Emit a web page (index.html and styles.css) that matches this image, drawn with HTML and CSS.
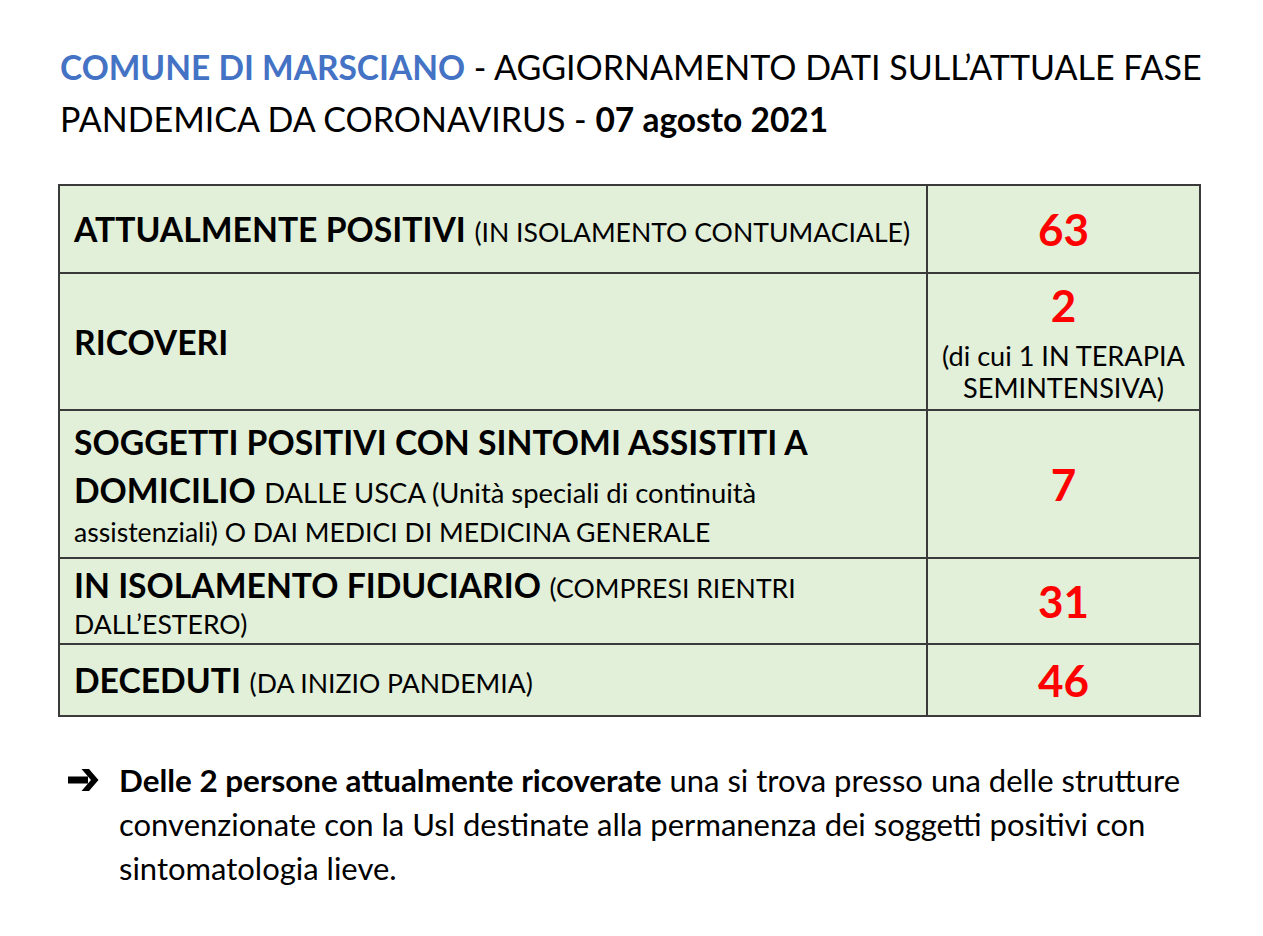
FILE: index.html
```html
<!DOCTYPE html>
<html lang="it">
<head>
<meta charset="utf-8">
<title>Comune di Marsciano - Aggiornamento dati</title>
<link rel="stylesheet" href="styles.css">
</head>
<body>
<header class="heading">
  <div class="line"><span class="brand">COMUNE DI MARSCIANO</span> - AGGIORNAMENTO DATI SULL’ATTUALE FASE</div>
  <div class="line">PANDEMICA DA CORONAVIRUS - <b class="date">07 agosto 2021</b></div>
</header>

<table class="data">
  <tr class="r1">
    <td class="label"><span class="ln ln-one"><span class="big">ATTUALMENTE POSITIVI</span> <span class="small">(IN ISOLAMENTO CONTUMACIALE)</span></span></td>
    <td class="value"><span class="num">63</span></td>
  </tr>
  <tr class="r2">
    <td class="label"><span class="ln ln-one"><span class="big">RICOVERI</span></span></td>
    <td class="value">
      <span class="num num-top">2</span>
      <span class="note">(di cui 1 IN TERAPIA</span>
      <span class="note">SEMINTENSIVA)</span>
    </td>
  </tr>
  <tr class="r3">
    <td class="label">
      <span class="ln ln-big"><span class="big">SOGGETTI POSITIVI CON SINTOMI ASSISTITI A</span></span>
      <span class="ln ln-big"><span class="big">DOMICILIO</span> <span class="small">DALLE USCA (Unità speciali di continuità</span></span>
      <span class="ln ln-small"><span class="small">assistenziali) O DAI MEDICI DI MEDICINA GENERALE</span></span>
    </td>
    <td class="value"><span class="num">7</span></td>
  </tr>
  <tr class="r4">
    <td class="label">
      <span class="ln ln-mid"><span class="big">IN ISOLAMENTO FIDUCIARIO</span> <span class="small">(COMPRESI RIENTRI</span></span>
      <span class="ln ln-small"><span class="small">DALL’ESTERO)</span></span>
    </td>
    <td class="value"><span class="num">31</span></td>
  </tr>
  <tr class="r5">
    <td class="label"><span class="ln ln-one"><span class="big">DECEDUTI</span> <span class="small">(DA INIZIO PANDEMIA)</span></span></td>
    <td class="value"><span class="num">46</span></td>
  </tr>
</table>

<div class="note-block">
  <span class="arrow" aria-hidden="true">
    <svg width="31" height="22" viewBox="0 0 31 22"><path d="M0 7.5 H20 V14.5 H0 Z M13.5 0 H21 L30.5 11 L21 22 H13.5 L23 11 Z" fill="#000"/></svg>
  </span>
  <p class="body-text"><b>Delle 2 persone attualmente ricoverate</b> una si trova presso una delle strutture<br>convenzionate con la Usl destinate alla permanenza dei soggetti positivi con<br>sintomatologia lieve.</p>
</div>
</body>
</html>
```
FILE: styles.css
```css
html, body {
  margin: 0;
  padding: 0;
  background: #ffffff;
}

body {
  font-family: "Lato", "Open Sans", sans-serif;
  color: #000000;
}

.heading {
  padding: 41px 0 0 60px;
  font-size: 34px;
  line-height: 51px;
  white-space: nowrap;
}

.brand {
  color: #4472c4;
  font-weight: 700;
  font-size: 33.5px;
}

.date {
  font-weight: 700;
  font-size: 33.5px;
}

.data {
  margin: 39px 0 0 58px;
  width: 1143px;
  border-collapse: collapse;
  background: #e2efd9;
  table-layout: fixed;
}

.data td {
  border: 2px solid #3a3a3a;
  padding: 0;
  vertical-align: middle;
  white-space: nowrap;
}

.data td.label {
  width: 852px;
  padding-left: 14px;
}

.data td.value {
  text-align: center;
}

.r1 { height: 88px; }
.r2 { height: 137px; }
.r3 { height: 148px; }
.r4 { height: 86px; }
.r5 { height: 72px; }

.r2 .value {
  padding-top: 3px;
}

.r4 .label {
  padding-top: 4px;
}

.ln {
  display: block;
  font-size: 33.7px;
}

.ln > span {
  line-height: 1;
}

.big {
  font-weight: 700;
  font-size: 33.7px;
}

.small {
  font-size: 26.6px;
}

.ln-one { line-height: 44px; }
.ln-big { line-height: 48px; }
.ln-mid { line-height: 42px; }
.ln-small { line-height: 36px; font-size: 26.6px; }

.r3 .ln-big .small {
  font-size: 27.4px;
}

.num {
  display: block;
  color: #ff0000;
  font-weight: 700;
  font-size: 44px;
  line-height: 46px;
}

.num-top {
  margin-bottom: 12px;
}

.note {
  display: block;
  font-size: 27.1px;
  line-height: 32px;
}

.note-block {
  display: flex;
  align-items: flex-start;
  margin: 41px 0 0 68px;
}

.arrow {
  flex: none;
  width: 51px;
  height: 44px;
  display: flex;
  align-items: center;
}

.arrow svg {
  display: block;
}

.body-text {
  margin: 0;
  font-size: 31px;
  line-height: 44px;
  white-space: nowrap;
}

.body-text b {
  font-weight: 700;
  font-size: 31.4px;
}
```
